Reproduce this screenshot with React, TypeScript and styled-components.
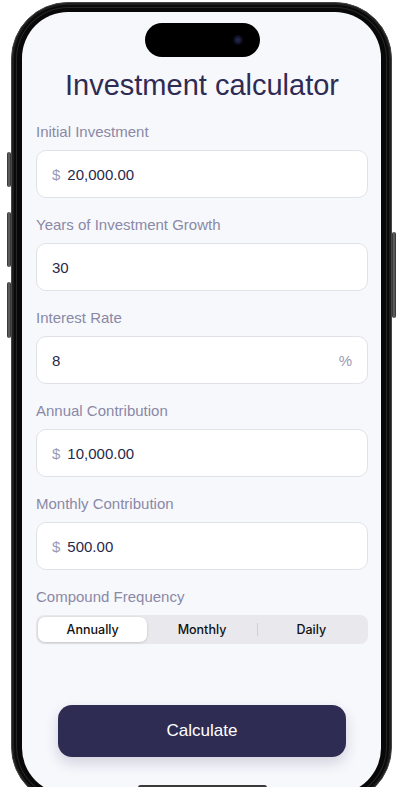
import styled, { createGlobalStyle } from 'styled-components';

const GlobalStyle = createGlobalStyle`
	html, body {
		margin: 0;
		padding: 0;
		width: 400px;
		height: 787px;
		overflow: hidden;
		background: #ffffff;
		font-family: 'Liberation Sans', Arial, sans-serif;
	}
`;

const colors = {
	navy: '#2f2c54',
	label: '#8a88a6',
	value: '#29284a',
	prefix: '#9b99b4',
	screen: '#f7f8fc',
	border: '#e1e1e8',
	segment: '#e8e8ed',
};

const Page = styled.div`
	width: 400px;
	height: 787px;
	padding: 2px 0 0 11px;
	box-sizing: border-box;
	overflow: hidden;
`;

const Phone = styled.div`
	position: relative;
	width: 381px;
	height: 802px;
	box-sizing: border-box;
	padding: 9px 10px;
	border-radius: 57px;
	background: #080808;
	border: 1.5px solid #464646;
	box-shadow: inset 0 0 0 2px #1e1e1e, inset 0 0 0 4px #0a0a0a, inset 0 0 0 5px #262626;
`;

const SideButton = styled.span<{ $top: number; $height: number; $right?: boolean }>`
	position: absolute;
	top: ${(p) => p.$top}px;
	height: ${(p) => p.$height}px;
	${(p) => (p.$right ? 'right: -5px;' : 'left: -5px;')}
	width: 4px;
	border-radius: 2px;
	background: linear-gradient(90deg, #2a2a2a, #6a6a6a 50%, #2a2a2a);
`;

const Screen = styled.div`
	height: 100%;
	box-sizing: border-box;
	border-radius: 46px;
	background: ${colors.screen};
	overflow: hidden;
	display: flex;
	flex-direction: column;
	padding: 11px 13px 0 14px;
`;

const Island = styled.div`
	align-self: center;
	position: relative;
	width: 115px;
	height: 34px;
	border-radius: 17px;
	background: #000000;
	flex-shrink: 0;
`;

const Camera = styled.span`
	position: absolute;
	right: 17px;
	top: 12px;
	width: 10px;
	height: 10px;
	border-radius: 50%;
	background: radial-gradient(circle, #2a2c5a 0%, #0c0c1a 60%, #000 100%);
`;

const Title = styled.h1`
	margin: 11px 0 0;
	text-align: center;
	color: ${colors.navy};
	font-weight: 400;
	font-size: 29px;
	line-height: 34px;
`;

const Form = styled.div`
	display: flex;
	flex-direction: column;
	margin-top: 21px;
	gap: 18px;
`;

const Field = styled.div`
	display: flex;
	flex-direction: column;
	gap: 9px;
`;

const Label = styled.label`
	color: ${colors.label};
	font-size: 15px;
	line-height: 18px;
`;

const InputBox = styled.div`
	display: flex;
	align-items: center;
	height: 48px;
	box-sizing: border-box;
	padding: 0 20px 0 15px;
	background: #ffffff;
	border: 1px solid ${colors.border};
	border-radius: 10px;
	font-size: 15px;
`;

const Prefix = styled.span`
	color: ${colors.prefix};
	margin-right: 7px;
`;

const Value = styled.span`
	flex: 1;
	color: ${colors.value};
`;

const Suffix = styled.span`
	color: ${colors.prefix};
	font-size: 15px;
	margin-right: -5px;
`;

const Segmented = styled.div`
	display: flex;
	height: 29px;
	box-sizing: border-box;
	padding: 2px;
	border-radius: 8px;
	background: ${colors.segment};
`;

const Segment = styled.div<{ $active?: boolean; $divider?: boolean }>`
	position: relative;
	flex: 1;
	display: flex;
	align-items: center;
	justify-content: center;
	border-radius: 7px;
	font-family: Inter, 'Liberation Sans', sans-serif;
	font-size: 12.5px;
	font-weight: 500;
	color: #111111;
	background: ${(p) => (p.$active ? '#ffffff' : 'transparent')};
	box-shadow: ${(p) => (p.$active ? '0 1px 3px rgba(0,0,0,0.12), 0 0 0 0.5px rgba(0,0,0,0.04)' : 'none')};
	&::before {
		content: '';
		display: ${(p) => (p.$divider ? 'block' : 'none')};
		position: absolute;
		left: 0;
		top: 6px;
		bottom: 6px;
		width: 1px;
		background: #cfcfd6;
	}
`;

const CalcButton = styled.button`
	align-self: center;
	margin-top: 61px;
	width: 288px;
	height: 52px;
	border: none;
	border-radius: 14px;
	background: ${colors.navy};
	color: #ffffff;
	font-family: 'Liberation Sans', Arial, sans-serif;
	font-size: 17px;
	box-shadow: 0 6px 14px rgba(40, 38, 80, 0.18);
	flex-shrink: 0;
`;

const HomeIndicator = styled.div`
	align-self: center;
	margin-top: 28px;
	width: 129px;
	height: 5px;
	border-radius: 3px;
	background: #3a3a3a;
	flex-shrink: 0;
`;

type FieldData = { label: string; value: string; prefix?: string; suffix?: string };

const fields: FieldData[] = [
	{ label: 'Initial Investment', value: '20,000.00', prefix: '$' },
	{ label: 'Years of Investment Growth', value: '30' },
	{ label: 'Interest Rate', value: '8', suffix: '%' },
	{ label: 'Annual Contribution', value: '10,000.00', prefix: '$' },
	{ label: 'Monthly Contribution', value: '500.00', prefix: '$' },
];

const frequencies = ['Annually', 'Monthly', 'Daily'];
const activeIndex = 0;

const App = () => {
	return (
		<Page>
			<GlobalStyle />
			<Phone>
				<SideButton $top={149} $height={35} />
				<SideButton $top={209} $height={55} />
				<SideButton $top={279} $height={56} />
				<SideButton $top={229} $height={86} $right />
				<Screen>
					<Island>
						<Camera />
					</Island>
					<Title>Investment calculator</Title>
					<Form>
						{fields.map((f) => (
							<Field key={f.label}>
								<Label>{f.label}</Label>
								<InputBox>
									{f.prefix && <Prefix>{f.prefix}</Prefix>}
									<Value>{f.value}</Value>
									{f.suffix && <Suffix>{f.suffix}</Suffix>}
								</InputBox>
							</Field>
						))}
						<Field>
							<Label>Compound Frequency</Label>
							<Segmented>
								{frequencies.map((f, i) => (
									<Segment
										key={f}
										$active={i === activeIndex}
										$divider={i > 0 && i !== activeIndex && i - 1 !== activeIndex}
									>
										{f}
									</Segment>
								))}
							</Segmented>
						</Field>
					</Form>
					<CalcButton>Calculate</CalcButton>
					<HomeIndicator />
				</Screen>
			</Phone>
		</Page>
	);
};

export default App;
